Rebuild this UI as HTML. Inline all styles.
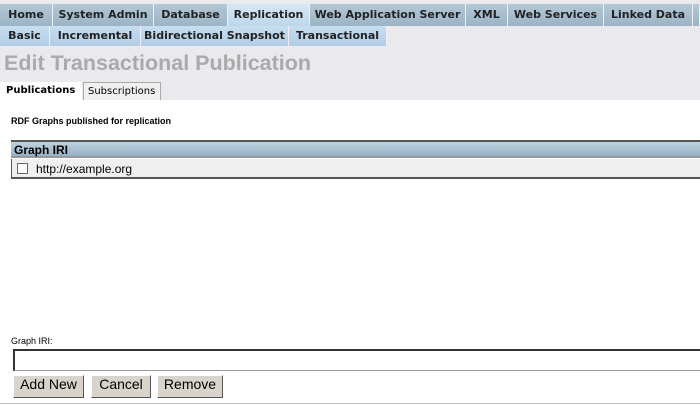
<!DOCTYPE html>
<html><head><style>
body{margin:0;width:700px;height:405px;background:#fff;font-family:"DejaVu Sans","Liberation Sans",sans-serif;overflow:hidden;position:relative}
.top{position:absolute;left:0;top:0;width:700px;height:100px;background:#e9e9ee}
.t{position:absolute;box-sizing:border-box;font-size:11px;font-weight:bold;color:#222;text-align:center;border-right:1px solid #eef;}
.r1{top:4px;height:22px;line-height:22px;background:linear-gradient(#b4c8d6,#9cb4c6)}
.r1.a{background:linear-gradient(#d8e8f4,#bcd6ea)}
.r2{top:26px;height:20px;line-height:20px;background:linear-gradient(#c8def0,#b0cce4)}
h1{position:absolute;left:4px;top:51px;margin:0;font:bold 21.5px "Liberation Sans",sans-serif;color:#aaa}
.st{position:absolute;top:82px;height:18px;line-height:18px;font-size:10px;box-sizing:border-box}
.lbl{position:absolute;font:bold 10px "Liberation Sans",sans-serif}
.b{position:absolute;top:375px;height:23px;line-height:22px;text-align:center;background:#d8d4cc;border:1px solid;border-color:#fff #555 #555 #fff;box-sizing:border-box;font:14px 'Liberation Sans',sans-serif}
</style></head><body>
<div class="top"></div>
<div class="t r1" style="left:0;width:53px">Home</div>
<div class="t r1" style="left:53px;width:101px">System Admin</div>
<div class="t r1" style="left:154px;width:74px">Database</div>
<div class="t r1 a" style="left:228px;width:82px">Replication</div>
<div class="t r1" style="left:310px;width:156px">Web Application Server</div>
<div class="t r1" style="left:466px;width:42px">XML</div>
<div class="t r1" style="left:508px;width:96px">Web Services</div>
<div class="t r1" style="left:604px;width:89px">Linked Data</div>
<div class="t r1" style="left:693px;width:7px"></div>
<div class="t r2" style="left:0;width:50px">Basic</div>
<div class="t r2" style="left:50px;width:91px">Incremental</div>
<div class="t r2" style="left:141px;width:148px">Bidirectional Snapshot</div>
<div class="t r2" style="left:289px;width:98px">Transactional</div>
<h1>Edit Transactional Publication</h1>
<div class="st" style="left:0;width:82px;background:#fff;font-weight:bold;padding-left:6px">Publications</div>
<div class="st" style="left:83px;width:78px;background:#f0f0f0;border:1px solid #aaa;border-bottom:none;padding-left:4px">Subscriptions</div>
<div class="lbl" style="left:11px;top:116px;font-size:9px">RDF Graphs published for replication</div>
<div style="position:absolute;left:11px;top:140px;width:689px;height:18px;border-top:2px solid #555;box-sizing:border-box;background:linear-gradient(#c0d4e2,#94b0c4);font:bold 12px 'Liberation Sans',sans-serif;line-height:16px;padding-left:3px;border-bottom:2px solid #999">Graph IRI</div>
<div style="position:absolute;left:11px;top:159px;width:689px;height:20px;border-left:1px solid #555;border-bottom:2px solid #555;box-sizing:border-box;background:#f0f0f0;font:12px 'Liberation Sans',sans-serif;line-height:20px">
<span style="display:inline-block;width:9px;height:9px;border:1px solid #666;background:#fff;margin:0 8px 0 5px;vertical-align:-1px"></span>http://example.org</div>
<div style="position:absolute;left:11px;top:336px;font:9px 'Liberation Sans',sans-serif">Graph IRI:</div>
<div style="position:absolute;left:13px;top:349px;width:690px;height:22px;border:1px solid #999;border-top:2px solid #333;border-left:2px solid #333;box-sizing:border-box;background:#fff"></div>
<div class="b" style="left:13px;width:71px">Add New</div>
<div class="b" style="left:91px;width:60px">Cancel</div>
<div class="b" style="left:157px;width:66px">Remove</div>
<div style="position:absolute;left:0;top:403px;width:700px;height:1px;background:#bbb"></div>
</body></html>
